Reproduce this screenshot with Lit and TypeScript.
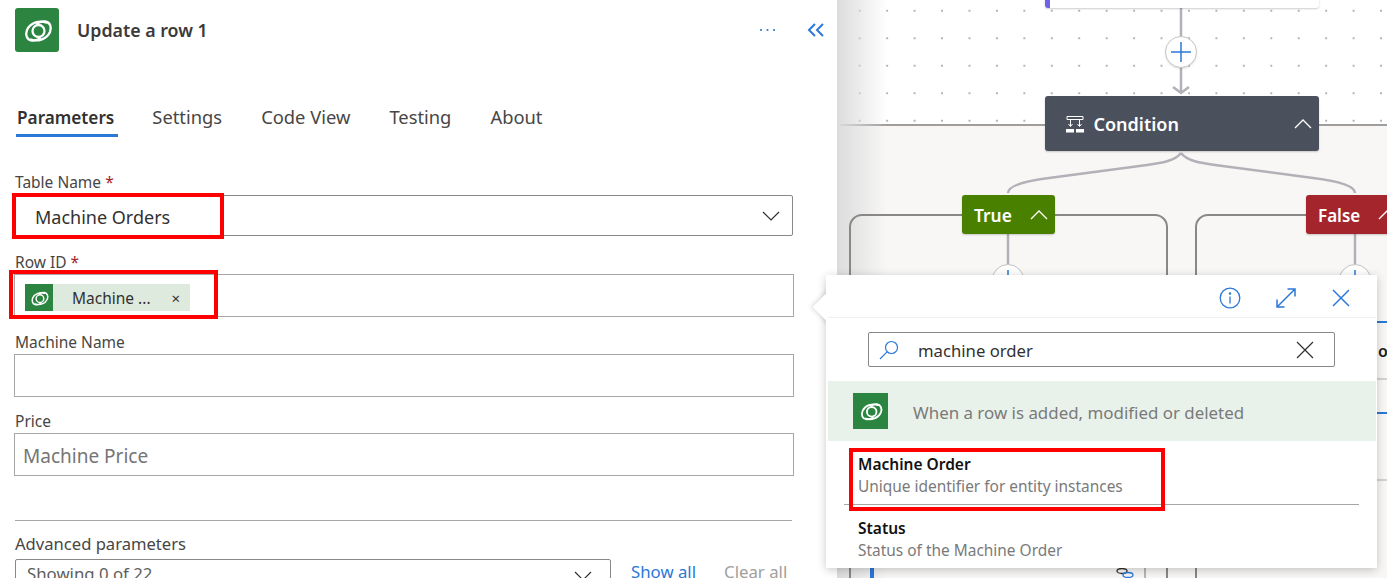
import { LitElement, html, css, svg } from 'lit';
import { customElement } from 'lit/decorators.js';

const logo = (size: number) => html`<svg width=${size} height=${size} viewBox="0 0 44 44">
  <g fill="none" stroke="#fff" stroke-width="2.300" stroke-linecap="round">
    <path d="M31 14.500C24 12 15 15 12 22c-2 5 0 10 5 10.500 3 .3 5-.5 8-2" />
    <path d="M16 31.500C23 34 32 31 35 24c2-5 0-10-5-10.500-3-.3-5 .5-8 2" />
    <circle cx="23.500" cy="23" r="6" />
  </g>
</svg>`;

const chevronDown = html`<svg width="18" height="10" viewBox="0 0 18 10"><path d="M1 1l8 8 8-8" fill="none" stroke="#323130" stroke-width="1.200"/></svg>`;
const chevronUp = html`<svg width="18" height="10" viewBox="0 0 18 10" fill="none" stroke="#fff" stroke-width="1.300"><path d="M1 9l8-8 8 8"/></svg>`;
const plusIcon = html`<svg width="20" height="20" viewBox="0 0 20 20" stroke="#2b78d8" stroke-width="1.500"><path d="M10 0v20M0 10h20"/></svg>`;

@customElement('app-root')
export class AppRoot extends LitElement {
  static styles = css`
    :host {
      display: flex;
      position: relative;
      width: 1387px;
      height: 578px;
      overflow: hidden;
      font-family: "Noto Sans", "Open Sans", sans-serif;
      color: #323130;
      background: #fff;
    }
    .panel {
      width: 837px;
      flex: none;
      box-sizing: border-box;
      padding: 8px 43px 0 14px;
      background: #fff;
      position: relative;
      z-index: 2;
    }
    .head {
      display: flex;
      align-items: center;
      height: 44px;
      padding-left: 1px;
    }
    .head-logo {
      width: 44px;
      height: 44px;
      background: #2b8541;
      border-radius: 3px;
      display: flex;
    }
    .title {
      margin-left: 18px;
      font-size: 17.800px;
      font-weight: 600;
      color: #3b3a39;
      flex: 1;
    }
    .more {
      display: flex;
      margin-right: 31px;
    }
    .collapse {
      display: flex;
      margin-right: -31px;
    }
    .tabs {
      display: flex;
      align-items: baseline;
      gap: 39px;
      margin-top: 53px;
      padding-left: 3px;
      font-size: 18.350px;
      line-height: 24px;
      color: #484644;
    }
    .tab-on {
      font-size: 17.200px;
      font-weight: 600;
      color: #323130;
      position: relative;
      margin-right: -1px;
    }
    .tab-on::after {
      content: "";
      position: absolute;
      left: -1px;
      right: -4px;
      top: 28px;
      height: 3px;
      background: #2b78d8;
    }
    .lab {
      font-size: 15.500px;
      line-height: 20px;
      color: #484644;
      padding-left: 1px;
    }
    .req { color: #a4262c; }
    .box {
      box-sizing: border-box;
      border: 1px solid #a6a6a6;
      display: flex;
      align-items: center;
      width: 780px;
    }
    .f1 { margin-top: 42px; }
    .f1 .box {
      height: 41px;
      border-color: #8a8886;
      border-radius: 2px;
      margin-top: 3px;
      width: 779px;
      padding: 0 12px 0 20px;
      font-size: 18px;
      justify-content: space-between;
    }
    .f1 .box span { margin-top: 2px; }
    .f2 { margin-top: 16px; }
    .f2 .box { height: 43px; margin-top: 2px; padding-left: 10px; }
    .chip {
      display: flex;
      align-items: center;
      width: 165px;
      height: 27px;
      margin-top: 4px;
      background: #deeade;
      font-size: 15.500px;
    }
    .chip-logo {
      width: 28px;
      height: 27px;
      background: #2b8541;
      display: flex;
      justify-content: center;
      align-items: center;
    }
    .chip-text { margin-left: 19px; flex: 1; }
    .chip-x { margin-right: 10px; font-size: 15px; color: #323130; }
    .f3 { margin-top: 15px; }
    .f3 .box { height: 43px; margin-top: 2px; }
    .f4 { margin-top: 14px; }
    .f4 .box {
      height: 43px;
      margin-top: 2px;
      padding: 2px 0 0 8px;
      font-size: 19px;
      color: #757575;
    }
    .rule {
      height: 1px;
      background: #a6a6a6;
      width: 777px;
      margin: 44px 0 0 1px;
    }
    .f5 { margin-top: 13px; }
    .f5 .lab { font-size: 16.600px; }
    .adv {
      display: flex;
      align-items: flex-start;
      margin-top: 5px;
      font-size: 16.800px;
    }
    .sel {
      box-sizing: border-box;
      width: 596px;
      height: 40px;
      margin-left: 1px;
      border: 1px solid #8a8886;
      border-radius: 2px;
      padding: 2px 18px 0 11px;
      display: flex;
      justify-content: space-between;
      line-height: 24px;
      color: #605e5c;
    }
    .sel svg { margin-top: 9px; }
    .link { margin: 0 0 0 20px; line-height: 26px; color: #2b78d8; }
    .off { margin-left: 28px; color: #a19f9d; }

    .canvas {
      flex: 1;
      position: relative;
      background: #f8f7f6;
      overflow: hidden;
    }
    .sky {
      height: 124px;
      background-color: #fff;
      background-image: radial-gradient(circle, #b4b4b4 0.7px, transparent 1.1px);
      background-size: 27.450px 27.500px;
      background-position: 9px -3px;
      border-bottom: 2px solid #a09e9c;
    }
    .shade {
      position: absolute;
      left: 0;
      top: 0;
      bottom: 0;
      width: 50px;
      background: linear-gradient(90deg, #dcdcdc, rgba(255,255,255,0));
    }
    .wires { position: absolute; left: 0; top: 0; }
    .node {
      position: absolute;
      box-sizing: border-box;
      display: flex;
      align-items: center;
      color: #fff;
      border-radius: 3px;
      font-weight: 600;
      box-shadow: 0 1px 2px rgba(0,0,0,.2);
    }
    .top-card {
      left: 208px; top: -40px; width: 274px; height: 48px;
      background: #fff;
      border-left: 5px solid #7160e8;
    }
    .cond {
      left: 207.500px; top: 96px; width: 274.500px; height: 55px;
      background: #4a505c;
      font-size: 18px;
      padding-left: 21px;
    }
    .cond-text { margin-left: 10px; flex: 1; }
    .cond svg:last-child { margin-right: 7px; }
    .yes, .no { top: 195px; height: 39px; padding-left: 12px; gap: 18px; }
    .yes { left: 125px; width: 93px; background: #4a8000; font-size: 17.400px; }
    .no { left: 469px; width: 100px; background: #a4262c; font-size: 17px; }
    .no span { margin-top: 1px; }
    .plus {
      position: absolute;
      box-sizing: border-box;
      width: 32px;
      height: 32px;
      border-radius: 50%;
      background: #fff;
      border: 1px solid #c8c6c4;
      display: flex;
      align-items: center;
      justify-content: center;
      box-shadow: 0 1px 2px rgba(0,0,0,.12);
    }
    .stub-o {
      position: absolute;
      left: 541px;
      top: 340px;
      font-size: 16px;
      font-weight: 600;
      color: #201f1e;
    }
    .chain { position: absolute; left: 279px; top: 568px; }

    .pop {
      position: absolute;
      left: 826px;
      top: 275px;
      width: 551px;
      height: 293px;
      background: #fff;
      z-index: 3;
      border-radius: 2px;
      box-shadow: 0 2px 10px rgba(0,0,0,.22);
    }
    .arrow {
      position: absolute;
      left: -11px;
      top: 17px;
      width: 30px;
      height: 30px;
      background: #fff;
      transform: rotate(45deg) scale(.82);
      box-shadow: -2px 2px 5px rgba(0,0,0,.12);
    }
    .pop-in {
      position: relative;
      height: 100%;
      background: #fff;
      display: flex;
      flex-direction: column;
      padding: 0 1px 0 2px;
    }
    .pop-head {
      box-sizing: border-box;
      height: 43px;
      padding: 3px 25px 0 0;
      flex: none;
      border-bottom: 1px solid #f0f0f0;
      display: flex;
      justify-content: flex-end;
      align-items: center;
      gap: 34px;
    }
    .search {
      box-sizing: border-box;
      margin: 14px 0 0 40px;
      width: 467px;
      height: 35px;
      flex: none;
      border: 1px solid #8a8886;
      border-radius: 2px;
      display: flex;
      align-items: center;
      padding: 0 20px 0 10px;
      font-size: 16.700px;
    }
    .search span { flex: 1; margin: 2px 0 0 19px; }
    .band {
      margin-top: 14px;
      height: 60px;
      flex: none;
      background: #e9f2ea;
      display: flex;
      align-items: center;
      padding-left: 25px;
      font-size: 16.900px;
      color: #7a7a7a;
    }
    .band-text { margin-top: 2px; }
    .band-logo {
      width: 35px;
      height: 36px;
      background: #2b8541;
      display: flex;
      align-items: center;
      justify-content: center;
      margin-right: 25px;
    }
    .item { padding-left: 30px; line-height: 22px; }
    .item b { display: block; font-size: 15.500px; font-weight: 600; color: #111; }
    .item span { display: block; font-size: 15.450px; color: #7a7a7a; }
    .i1 { margin-top: 12px; padding-bottom: 7px; }
    .i2 { padding-top: 12px; }
    .i-rule { height: 1px; background: #a6a6a6; margin: 0 17px 0 16px; }
    .mark {
      position: absolute;
      box-sizing: border-box;
      border: 4px solid #f00;
      z-index: 4;
      pointer-events: none;
    }
  `;

  render() {
    return html`
      <div class="panel">
        <div class="head">
          <div class="head-logo">${logo(44)}</div>
          <div class="title">Update a row 1</div>
          <div class="more">
            <svg width="17" height="4" viewBox="0 0 17 4" fill="#2b78d8"><circle cx="2" cy="2" r="1.100"/><circle cx="8.500" cy="2" r="1.100"/><circle cx="15" cy="2" r="1.100"/></svg>
          </div>
          <div class="collapse">
            <svg width="18" height="14" viewBox="0 0 18 14" fill="none" stroke="#2b78d8" stroke-width="2"><path d="M8 1L2 7l6 6M16 1l-6 6 6 6"/></svg>
          </div>
        </div>
        <div class="tabs">
          <div class="tab-on">Parameters</div>
          <div>Settings</div>
          <div>Code View</div>
          <div>Testing</div>
          <div>About</div>
        </div>
        <div class="f1">
          <div class="lab">Table Name <span class="req">*</span></div>
          <div class="box"><span>Machine Orders</span>${chevronDown}</div>
        </div>
        <div class="f2">
          <div class="lab">Row ID <span class="req">*</span></div>
          <div class="box">
            <div class="chip">
              <div class="chip-logo">${logo(28)}</div>
              <div class="chip-text">Machine ...</div>
              <div class="chip-x">×</div>
            </div>
          </div>
        </div>
        <div class="f3">
          <div class="lab">Machine Name</div>
          <div class="box"></div>
        </div>
        <div class="f4">
          <div class="lab">Price</div>
          <div class="box">Machine Price</div>
        </div>
        <div class="rule"></div>
        <div class="f5">
          <div class="lab">Advanced parameters</div>
          <div class="adv">
            <div class="sel"><span>Showing 0 of 22</span>${chevronDown}</div>
            <div class="link">Show all</div>
            <div class="link off">Clear all</div>
          </div>
        </div>
      </div>

      <div class="canvas">
        <div class="sky"></div>
        <div class="shade"></div>
        <svg class="wires" width="550" height="578" fill="none">
          ${svg`
            <g stroke="#b3b0b8" stroke-width="2.500">
              <path d="M344 8V92M336 87l8 6 8-6" />
              <path d="M344 153c-6 8-20 10-34 12l-98 13c-24 3-41 8-41 15" />
              <path d="M344 153c6 8 20 10 34 12l98 13c24 3 42 8 42 15" />
              <path d="M171 234V270M518 234V270" />
            </g>
            <g stroke="#8a8886" stroke-width="2">
              <path d="M125 215H25a12 12 0 0 0-12 12V578" />
              <path d="M218 215H318a12 12 0 0 1 12 12V578" />
              <path d="M469 215H371a12 12 0 0 0-12 12V578" />
              <path d="M308 560V578" stroke="#b8b6b4" />
              <path d="M511 379H550M511 480H550" stroke-width="1.500" stroke="#c8c6c4" />
            </g>
            <path d="M511 322H550M511 413H550" stroke="#2b78d8" stroke-width="2" />
            <path d="M35 560V578" stroke="#2b78d8" stroke-width="4" />
          `}
        </svg>
        <div class="node top-card"></div>
        <div class="plus" style="left:328px;top:36px">${plusIcon}</div>
        <div class="node cond">
          <svg width="18" height="18" viewBox="0 0 18 18" fill="none" stroke="#fff" stroke-width="1"><path d="M1 1.500h16v3H1zM4.500 4.500V11M13.500 4.500V11M2.500 9l2 2.500 2-2.500M11.500 9l2 2.500 2-2.500"/><path d="M0 14h8v3.500H0zM10 14h8v3.500h-8z" fill="#fff" stroke="none"/></svg>
          <span class="cond-text">Condition</span>
          ${chevronUp}
        </div>
        <div class="node yes">True ${chevronUp}</div>
        <div class="node no"><span>False</span> ${chevronUp}</div>
        <div class="plus" style="left:155px;top:264px">${plusIcon}</div>
        <div class="plus" style="left:502px;top:264px">${plusIcon}</div>
        <div class="stub-o">ot</div>
        <svg class="chain" width="18" height="10" viewBox="0 0 18 10" fill="none" stroke-width="1.300">
          <ellipse cx="6" cy="3" rx="5" ry="2.500" stroke="#323130" />
          <ellipse cx="12" cy="7" rx="5" ry="2.500" stroke="#2b78d8" />
        </svg>
      </div>

      <div class="pop">
        <div class="arrow"></div>
        <div class="pop-in">
          <div class="pop-head">
            <svg width="22" height="22" viewBox="0 0 22 22" fill="none" stroke="#2b78d8" stroke-width="1.300"><circle cx="11" cy="11" r="9.800"/><path d="M11 9.500v7"/><circle cx="11" cy="6.500" r=".6"/></svg>
            <svg width="22" height="22" viewBox="0 0 22 22" fill="none" stroke="#2b78d8" stroke-width="1.500"><path d="M2 20L20 2M12.500 2H20v7.500M2 12.500V20h7.500"/></svg>
            <svg width="20" height="20" viewBox="0 0 20 20" fill="none" stroke="#2b78d8" stroke-width="1.500"><path d="M2 2l16 16M18 2L2 18"/></svg>
          </div>
          <div class="search">
            <svg width="20" height="20" viewBox="0 0 20 20" fill="none" stroke="#2b78d8" stroke-width="1.200"><circle cx="12.500" cy="7.500" r="6"/><path d="M8.300 11.700L1 19"/></svg>
            <span>machine order</span>
            <svg width="18" height="18" viewBox="0 0 18 18" fill="none" stroke="#323130" stroke-width="1.200"><path d="M1 1l16 16M17 1L1 17"/></svg>
          </div>
          <div class="band">
            <div class="band-logo">${logo(36)}</div>
            <span class="band-text">When a row is added, modified or deleted</span>
          </div>
          <div class="item i1"><b>Machine Order</b><span>Unique identifier for entity instances</span></div>
          <div class="i-rule"></div>
          <div class="item i2"><b>Status</b><span>Status of the Machine Order</span></div>
        </div>
      </div>

      <div class="mark" style="left:12px;top:193px;width:212px;height:46px"></div>
      <div class="mark" style="left:9px;top:270px;width:209px;height:49px"></div>
      <div class="mark" style="left:849px;top:448px;width:316px;height:63px"></div>
    `;
  }
}
